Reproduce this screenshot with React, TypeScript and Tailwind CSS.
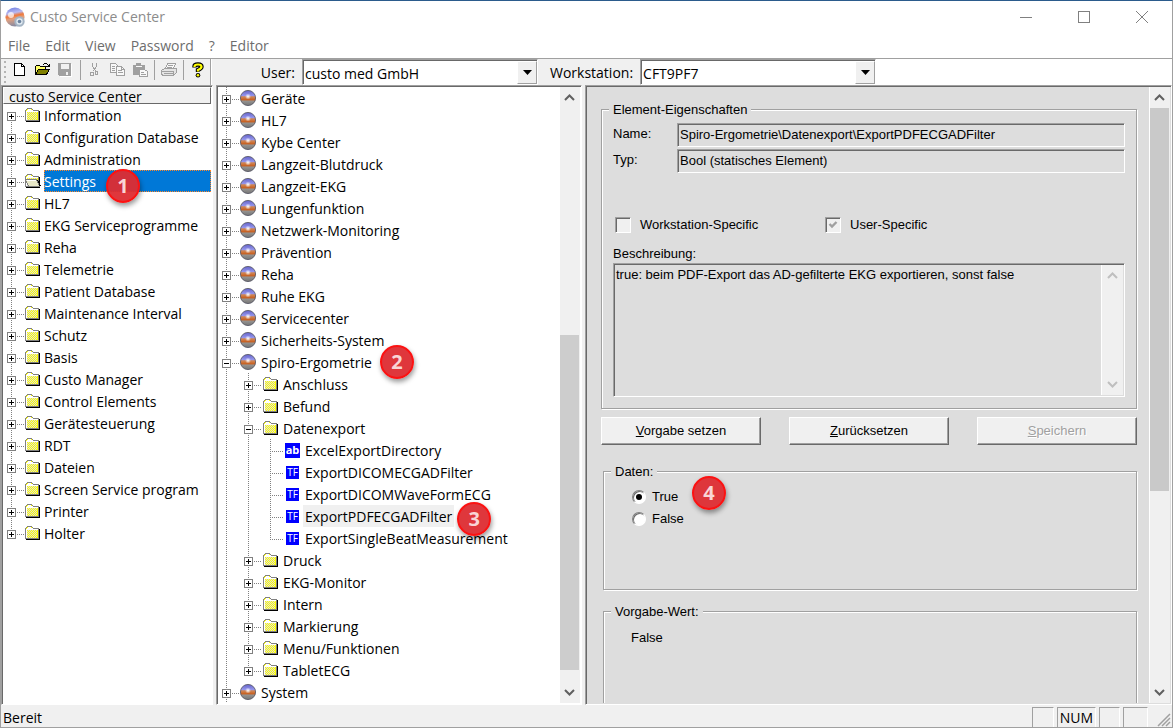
import { useState } from 'react';
import type { ReactNode } from 'react';

type IconKind = 'folder' | 'folderOpen' | 'ball' | 'ab' | 'tf';

type TreeNode = {
  label: string;
  icon: IconKind;
  badge?: number;
  badgeClass?: string;
  children?: TreeNode[];
  leaf?: boolean;
};

const sections = [
  'Information', 'Configuration Database', 'Administration', 'Settings', 'HL7',
  'EKG Serviceprogramme', 'Reha', 'Telemetrie', 'Patient Database',
  'Maintenance Interval', 'Schutz', 'Basis', 'Custo Manager', 'Control Elements',
  'Gerätesteuerung', 'RDT', 'Dateien', 'Screen Service program', 'Printer', 'Holter',
];

const modules = [
  'Geräte', 'HL7', 'Kybe Center', 'Langzeit-Blutdruck', 'Langzeit-EKG',
  'Lungenfunktion', 'Netzwerk-Monitoring', 'Prävention', 'Reha', 'Ruhe EKG',
  'Servicecenter', 'Sicherheits-System',
];

const folder = (label: string): TreeNode => ({ label, icon: 'folder' });

const settingsTree: TreeNode[] = [
  ...modules.map((label): TreeNode => ({ label, icon: 'ball' })),
  {
    label: 'Spiro-Ergometrie',
    icon: 'ball',
    badge: 2,
    badgeClass: '-top-1.5 left-full ml-1.5',
    children: [
      folder('Anschluss'),
      folder('Befund'),
      {
        label: 'Datenexport',
        icon: 'folder',
        children: [
          { label: 'ExcelExportDirectory', icon: 'ab', leaf: true },
          { label: 'ExportDICOMECGADFilter', icon: 'tf', leaf: true },
          { label: 'ExportDICOMWaveFormECG', icon: 'tf', leaf: true },
          { label: 'ExportPDFECGADFilter', icon: 'tf', leaf: true, badge: 3, badgeClass: '-top-[3px] left-full ml-[3px]' },
          { label: 'ExportSingleBeatMeasurement', icon: 'tf', leaf: true },
        ],
      },
      folder('Druck'),
      folder('EKG-Monitor'),
      folder('Intern'),
      folder('Markierung'),
      folder('Menu/Funktionen'),
      folder('TabletECG'),
    ],
  },
  { label: 'System', icon: 'ball' },
];

const sunken =
  'border border-t-[#a0a0a0] border-l-[#a0a0a0] border-r-white border-b-white shadow-[inset_1px_1px_0_#696969]';
const raised =
  'border border-t-white border-l-white border-r-[#696969] border-b-[#696969] shadow-[inset_-1px_-1px_0_#a0a0a0]';

function Badge({ n, className }: { n: number; className: string }) {
  return (
    <span
      className={`absolute z-10 flex h-[34px] w-[34px] items-center justify-center rounded-full border-2 border-[#fb1212] bg-[#dd2c32]/95 font-['Open_Sans',sans-serif] text-[20px] leading-none font-bold text-[#f9d5d6] shadow-[1px_3px_5px_rgba(0,0,0,0.4)] ${className}`}
    >
      {n}
    </span>
  );
}

function Ball() {
  return (
    <svg width="17" height="18" viewBox="0 0 17 18">
      <defs>
        <linearGradient id="ball" x1="0" y1="0" x2="0" y2="1">
          <stop offset="0" stopColor="#6464c8" />
          <stop offset="0.34" stopColor="#9494ec" />
          <stop offset="0.42" stopColor="#d08858" />
          <stop offset="0.62" stopColor="#c86020" />
          <stop offset="0.7" stopColor="#949290" />
          <stop offset="1" stopColor="#747474" />
        </linearGradient>
        <radialGradient id="shine">
          <stop offset="0" stopColor="#fff" />
          <stop offset="1" stopColor="#fff" stopOpacity="0" />
        </radialGradient>
      </defs>
      <circle cx="8" cy="9" r="7.6" fill="url(#ball)" stroke="#505060" strokeWidth="0.8" />
      <circle cx="8" cy="7.5" r="3" fill="url(#shine)" />
    </svg>
  );
}

// every second pixel of the folder face
const dither = Array.from({ length: 8 }, (_, row) =>
  Array.from({ length: 5 }, (_, col) => `M${3 + col * 2 - (row % 2)} ${4 + row}h1v1h-1z`).join(''),
).join('');

function Folder({ open }: { open?: boolean }) {
  return (
    <svg width="16" height="14" viewBox="0 0 16 14" shapeRendering="crispEdges">
      <path d="M1 13.5H14.5V3" fill="none" stroke="#000" />
      <path d="M.5 12.5V2.5L2.5.5H6.5L8.5 2.5H13.5V12.5Z" fill="#ffff00" stroke="#808080" />
      <path d={dither} fill="#dcdcdc" />
      <path d="M1.5 12V3.5H13M2 2.5H8M3 1.5H6" fill="none" stroke="#fff" />
      {open && (
        <>
          <path d="M.5 5.5H11.5L14.5 12.5H3.5Z" fill="#e8e8c8" stroke="#808080" />
          <path d="M1.5 6.5H11" stroke="#fff" />
          <path d="M12.5 6L15.5 12.5" stroke="#000" />
        </>
      )}
    </svg>
  );
}

function NodeIcon({ kind }: { kind: IconKind }) {
  if (kind === 'ball') return <Ball />;
  if (kind === 'ab') {
    return (
      <span className="ml-px flex h-[15px] w-[15px] items-center justify-center bg-[#0000ff] pb-px text-[11px] leading-none font-bold text-white">
        ab
      </span>
    );
  }
  if (kind === 'tf') {
    return (
      <span className="ml-0.5 flex h-[13px] w-[13px] items-center justify-center bg-[#0000ff] text-[10px] leading-none text-white">
        TF
      </span>
    );
  }
  return <Folder open={kind === 'folderOpen'} />;
}

type GuideProps = { up: boolean; down: boolean; box?: 'plus' | 'minus'; across?: boolean };

// one 22px indentation cell: dotted connector lines and the +/- box
function Guide({ up, down, box, across }: GuideProps) {
  return (
    <svg width="22" height="22" viewBox="0 0 22 22" className="shrink-0" shapeRendering="crispEdges">
      <g stroke="#808080" strokeDasharray="1 1">
        {up && <path d="M8.5 0V12" />}
        {down && <path d="M8.5 12V22" />}
        {across && <path d="M8 12.5H21" />}
      </g>
      {box && (
        <>
          <rect x="4.5" y="8.5" width="8" height="8" fill="#fff" stroke="#808080" />
          <path d={box === 'plus' ? 'M6 12.5H11M8.5 10V15' : 'M6 12.5H11'} stroke="#000" />
        </>
      )}
    </svg>
  );
}

type BranchProps = {
  nodes: TreeNode[];
  selected: string;
  onSelect: (label: string) => void;
  parents?: boolean[];
  openEnd?: boolean;
};

function Branch({ nodes, selected, onSelect, parents = [], openEnd = false }: BranchProps) {
  return (
    <ul>
      {nodes.map((node, i) => {
        const more = openEnd || i < nodes.length - 1;
        return (
          <li key={node.label}>
            <div className="flex h-[22px] items-center">
              {parents.map((line, p) => (
                <Guide key={p} up={line} down={line} />
              ))}
              <Guide up down={more} across box={node.leaf ? undefined : node.children ? 'minus' : 'plus'} />
              <span className={`flex w-[19px] shrink-0 items-center ${node.icon === 'folder' ? 'pl-px' : ''}`}>
                <NodeIcon kind={node.icon} />
              </span>
              <button
                type="button"
                onClick={() => onSelect(node.label)}
                className={`relative h-[22px] px-0.5 pt-px leading-[21px] whitespace-nowrap ${selected === node.label ? 'bg-[#f0f0f0]' : ''}`}
              >
                {node.label}
                {node.badge && <Badge n={node.badge} className={node.badgeClass ?? ''} />}
              </button>
            </div>
            {node.children && (
              <Branch nodes={node.children} selected={selected} onSelect={onSelect} parents={[...parents, more]} />
            )}
          </li>
        );
      })}
    </ul>
  );
}

function Chevron({ up, light }: { up?: boolean; light?: boolean }) {
  return (
    <svg width="11" height="7" viewBox="0 0 11 7" fill="none" stroke={light ? '#bfbfbf' : '#606060'} strokeWidth="2">
      <path d={up ? 'M1 6L5.5 1.5L10 6' : 'M1 1L5.5 5.5L10 1'} />
    </svg>
  );
}

function ScrollBar({ children, light, className }: { children?: ReactNode; light?: boolean; className: string }) {
  return (
    <div className={`flex shrink-0 flex-col bg-[#f0f0f0] pr-px ${className}`}>
      <button type="button" aria-label="Nach oben" className="flex h-[21px] shrink-0 items-center justify-center">
        <Chevron up light={light} />
      </button>
      <div className="flex min-h-0 flex-1 flex-col">{children}</div>
      <button type="button" aria-label="Nach unten" className="flex h-[21px] shrink-0 items-center justify-center">
        <Chevron light={light} />
      </button>
    </div>
  );
}

function Combo({ id, label, value }: { id: string; label: string; value: string }) {
  return (
    <>
      <label htmlFor={id} className="flex items-center justify-end pt-0.5 pr-[7px] pl-3 whitespace-nowrap">
        {label}
      </label>
      <div className={`relative w-[236px] shrink-0 bg-white ${sunken}`}>
        <select id={id} defaultValue={value} className="h-full w-full appearance-none bg-transparent pt-1 pl-0.5 leading-5 outline-none">
          <option>{value}</option>
        </select>
        <span className="pointer-events-none absolute top-px right-0 bottom-0 flex w-5 items-center justify-center border border-white border-r-[#a0a0a0] border-b-[#a0a0a0] bg-[#f0f0f0]">
          <svg width="9" height="5" viewBox="0 0 9 5">
            <path d="M0 0H9L4.5 5Z" />
          </svg>
        </span>
      </div>
    </>
  );
}

function Tool({ label, className, children }: { label: string; className: string; children: ReactNode }) {
  return (
    <button type="button" aria-label={label} className={`shrink-0 ${className}`}>
      <svg width="16" height="16" viewBox="0 0 16 16" fill="none" shapeRendering="crispEdges">
        {children}
      </svg>
    </button>
  );
}

const Separator = () => <span className="h-5 w-px shrink-0 bg-[#a0a0a0]" />;

function ToolBar() {
  return (
    <div className="flex h-full w-[210px] shrink-0 items-center border-r border-[#a0a0a0] pb-1 pl-[3px]">
      <svg width="3" height="22" viewBox="0 0 3 22" fill="#b4b4b4" className="mt-1">
        {[0, 5, 10, 15, 20].map((y) => (
          <rect key={y} y={y} width="2" height="2" />
        ))}
      </svg>
      <Tool label="Neu" className="ml-1.5">
        <path d="M1.5 1.5H8.5L11.5 4.5V13.5H1.5Z" fill="#fff" stroke="#000" />
        <path d="M8.5 1V4.5H12" stroke="#000" />
      </Tool>
      <Tool label="Öffnen" className="ml-1.5">
        <path d="M.5 12.5V4.5L1.5 3.5H4.5L5.5 4.5H10.5V7" fill="#ffff66" stroke="#000" />
        <path d="M.5 12.5L3.5 7.5H14.5L11.5 12.5Z" fill="#808000" stroke="#000" />
        <path d="M8 2.5H9M9 1.5H12M12 2.5H13M13 3.5H14M11 4.5H15M14.5 2V5" stroke="#000" />
      </Tool>
      <Tool label="Speichern" className="ml-1.5">
        <path d="M2 2H15V15H3L2 14Z" fill="#fff" />
        <path d="M1 1H14V14H2L1 13Z" fill="#a0a0a0" />
        <path d="M4 2H12V7H4ZM9 10H11V13H9Z" fill="#f0f0f0" />
      </Tool>
      <span className="ml-[7px]" />
      <Separator />
      <Tool label="Ausschneiden" className="ml-1.5">
        <g stroke="#a0a0a0">
          <path d="M5.5 1V4L8.5 9M9.5 1V4L6.5 9" />
          <path d="M3.5 10.5H6.5V13.5H3.5ZM8.5 9.5H10.5V12.5H8.5Z" />
        </g>
      </Tool>
      <Tool label="Kopieren" className="ml-1.5">
        <g stroke="#a0a0a0" fill="#f8f8f8">
          <path d="M1.5 1.5H6.5L8.5 3.5V10.5H1.5Z" />
          <path d="M7.5 4.5H12.5L15.5 7.5V13.5H7.5Z" />
          <path d="M3 4.5H6M3 6.5H6M3 8.5H6M9 8.5H13M9 10.5H14M12.5 5V7.5H15" />
        </g>
      </Tool>
      <Tool label="Einfügen" className="ml-[7px]">
        <path d="M1 3H4V1H9V3H13V13H1Z" fill="#a0a0a0" />
        <path d="M4 4.5H10" stroke="#f8f8f8" />
        <path d="M7.5 7.5H12.5L15.5 9.5V14.5H7.5Z" fill="#f8f8f8" stroke="#a0a0a0" />
        <path d="M9 10.5H12M9 12.5H14" stroke="#a0a0a0" />
      </Tool>
      <span className="ml-1.5" />
      <Separator />
      <Tool label="Drucken" className="ml-1.5">
        <path d="M4.5 6.5L6.5 1.5H14.5L12.5 6.5" fill="#f8f8f8" stroke="#a0a0a0" />
        <path d="M7 3.5H12M6 5.5H11" stroke="#a0a0a0" />
        <path d="M.5 8.5L3.5 6.5H15.5V10.5L12.5 13.5H2.5L.5 12.5Z" fill="#e4e4e4" stroke="#a0a0a0" />
        <path d="M1 9.5H12M3 11.5H12M12.5 9V13" stroke="#a0a0a0" />
      </Tool>
      <span className="ml-1.5" />
      <Separator />
      <Tool label="Hilfe" className="ml-1.5">
        <g shapeRendering="geometricPrecision">
          <path d="M4.5 5.5V4.5Q4.5 2.5 8 2.5T11.5 4.8Q11.5 6.4 8 8V10" stroke="#000" strokeWidth="4.4" />
          <circle cx="8" cy="13.2" r="2.3" fill="#000" />
          <path d="M4.5 5V4.5Q4.5 2.5 8 2.5T11.5 4.8Q11.5 6.4 8 8V9.5" stroke="#ffff00" strokeWidth="2.2" />
          <circle cx="8" cy="13.2" r="1.3" fill="#ffff00" />
        </g>
      </Tool>
    </div>
  );
}

function Group({ title, className, children }: { title: string; className: string; children: ReactNode }) {
  return (
    <fieldset
      className={`border border-[#a0a0a0] px-[11px] shadow-[1px_1px_0_#fff,inset_1px_1px_0_#fff] ${className}`}
    >
      <legend className="-ml-1 h-4 bg-[#dddddd] px-1 leading-[18px]">{title}</legend>
      {children}
    </fieldset>
  );
}

function Check({ label, checked, className }: { label: string; checked?: boolean; className: string }) {
  return (
    <label className={`flex h-4 items-center gap-[9px] leading-[18px] ${className}`}>
      <span className="grid">
        <input
          type="checkbox"
          defaultChecked={checked}
          className={`peer col-start-1 row-start-1 h-4 w-4 appearance-none bg-[#f0f0f0] ${sunken}`}
        />
        <svg
          width="16"
          height="16"
          viewBox="0 0 16 16"
          className="pointer-events-none col-start-1 row-start-1 hidden peer-checked:block"
        >
          <path d="M4.5 7L7 9.5L11.5 5" fill="none" stroke="#a0a0a0" strokeWidth="2.4" />
        </svg>
      </span>
      {label}
    </label>
  );
}

function Radio({ label, checked, onChange }: { label: string; checked: boolean; onChange: () => void }) {
  return (
    <label className="flex h-[22px] w-fit items-center gap-1.5">
      <span className="grid">
        <input
          type="radio"
          name="daten"
          checked={checked}
          onChange={onChange}
          className="peer col-start-1 row-start-1 h-3.5 w-3.5 appearance-none rounded-full border border-t-[#808080] border-r-white border-b-white border-l-[#808080] bg-white shadow-[inset_1px_1px_0_#696969]"
        />
        <svg
          width="14"
          height="14"
          viewBox="0 0 14 14"
          className="pointer-events-none col-start-1 row-start-1 hidden peer-checked:block"
        >
          <circle cx="7" cy="7" r="3" />
        </svg>
      </span>
      {label}
    </label>
  );
}

function Details() {
  const [value, setValue] = useState(true);

  return (
    <div className="min-w-0 flex-1 overflow-hidden pt-3.5 pr-3 pl-3.5 font-['Liberation_Sans',Arial,sans-serif] text-[13px] leading-4">
      <Group title="Element-Eigenschaften" className="pt-1.5 pb-[11px]">
        <div className="grid grid-cols-[64px_1fr] gap-y-0.5">
          <label htmlFor="name" className="pt-[3px]">Name:</label>
          <input
            id="name"
            readOnly
            value="Spiro-Ergometrie\Datenexport\ExportPDFECGADFilter"
            className={`h-6 w-full px-0.5 pb-0.5 outline-none ${sunken}`}
          />
          <label htmlFor="typ" className="pt-[3px]">Typ:</label>
          <input
            id="typ"
            readOnly
            value="Bool (statisches Element)"
            className={`h-6 w-full px-0.5 pb-0.5 outline-none ${sunken}`}
          />
        </div>
        <div className="mt-11 flex">
          <Check label="Workstation-Specific" className="ml-0.5 w-[210px]" />
          <Check label="User-Specific" checked className="" />
        </div>
        <label htmlFor="beschreibung" className="mt-[13px] block">Beschreibung:</label>
        <div className={`mt-px flex h-[134px] p-px ${sunken}`}>
          <textarea
            id="beschreibung"
            readOnly
            value="true: beim PDF-Export das AD-gefilterte EKG exportieren, sonst false"
            className="min-w-0 flex-1 resize-none overflow-hidden pt-0.5 pl-px outline-none"
          />
          <ScrollBar light className="w-[22px] border-l border-white" />
        </div>
      </Group>
      <div className="mt-2 grid grid-cols-3 gap-7">
        <button type="button" className={`h-7 bg-[#f0f0f0] ${raised}`}>
          <u>V</u>orgabe setzen
        </button>
        <button type="button" className={`h-7 bg-[#f0f0f0] ${raised}`}>
          <u>Z</u>urücksetzen
        </button>
        <button type="button" disabled className={`h-7 bg-[#f0f0f0] text-[#a0a0a0] text-shadow-[1px_1px_0_#fff] ${raised}`}>
          <u>S</u>peichern
        </button>
      </div>
      <Group title="Daten:" className="relative mt-[18px] ml-0.5 h-[127px] pt-[7px]">
        <div className="pl-[17px]">
          <Radio label="True" checked={value} onChange={() => setValue(true)} />
          <Radio label="False" checked={!value} onChange={() => setValue(false)} />
        </div>
        <Badge n={4} className="-top-[3px] left-[88px]" />
      </Group>
      <Group title="Vorgabe-Wert:" className="mt-[13px] ml-0.5 h-32 pt-[11px]">
        <p className="pl-4">False</p>
      </Group>
    </div>
  );
}

export default function App() {
  const [section, setSection] = useState('Settings');
  const [selected, setSelected] = useState('ExportPDFECGADFilter');

  return (
    <div className="flex h-screen flex-col border border-[#a0a0a0] border-t-[#2b5b8c] bg-[#f0f0f0] font-['Open_Sans','Noto_Sans',sans-serif] text-[14px] leading-[22px] text-black">
      {/* title bar */}
      <header className="flex h-8 shrink-0 items-center bg-white pr-px pl-1 text-[#8c8c8c]">
        <svg width="21" height="21" viewBox="0 0 21 21">
          <defs>
            <linearGradient id="app" x1="0" y1="0" x2="0.2" y2="1">
              <stop offset="0" stopColor="#6478e0" />
              <stop offset="0.35" stopColor="#b8b8f0" />
              <stop offset="0.5" stopColor="#f07838" />
              <stop offset="0.65" stopColor="#e0a080" />
              <stop offset="1" stopColor="#8c8ca0" />
            </linearGradient>
          </defs>
          <circle cx="10" cy="10" r="9.6" fill="url(#app)" />
          <circle cx="6" cy="8" r="3" fill="#fff" opacity="0.7" />
          <circle cx="14.5" cy="14.5" r="4.2" fill="#dfe8f0" stroke="#a4b4c4" strokeWidth="2" />
          <circle cx="14.5" cy="14.5" r="1.8" fill="#6c84a0" />
        </svg>
        <h1 className="flex-1 pl-1">Custo Service Center</h1>
        <button type="button" aria-label="Minimieren" className="flex w-[58px] justify-center">
          <svg width="12" height="12" stroke="#808080" shapeRendering="crispEdges"><path d="M0 6.5H12" /></svg>
        </button>
        <button type="button" aria-label="Maximieren" className="flex w-[58px] justify-center">
          <svg width="12" height="12" stroke="#808080" fill="none" shapeRendering="crispEdges"><path d="M.5 .5H11.5V11.5H.5Z" /></svg>
        </button>
        <button type="button" aria-label="Schließen" className="flex w-[58px] justify-center">
          <svg width="12" height="12" stroke="#808080"><path d="M0 0L12 12M12 0L0 12" /></svg>
        </button>
      </header>

      <nav className="flex h-[25px] shrink-0 items-center gap-[15px] bg-white pl-[7px] text-[#6d6d6d]">
        {['File', 'Edit', 'View', 'Password', '?', 'Editor'].map((item) => (
          <button key={item} type="button">{item}</button>
        ))}
      </nav>

      <div className="flex h-[27px] shrink-0 border-t border-[#a0a0a0]">
        <ToolBar />
        <div className="flex w-[327px] shrink-0 justify-end border-l border-white">
          <Combo id="user" label="User:" value="custo med GmbH" />
        </div>
        <Combo id="workstation" label="Workstation:" value="CFT9PF7" />
        <div className="flex-1 bg-white" />
      </div>

      <main className="flex min-h-0 flex-1 gap-[3px]">
        <section className={`w-[212px] shrink-0 bg-white p-px ${sunken}`}>
          <h2 className="h-[17px] border border-t-white border-r-[#696969] border-b-[#696969] border-l-white bg-[#f0f0f0] pl-[5px] leading-[18px]">
            custo Service Center
          </h2>
          <ul>
            {sections.map((label, i) => (
              <li key={label} className="flex h-[22px] items-center">
                <Guide up={i > 0} down={i < sections.length - 1} across box="plus" />
                <span className="flex w-[19px] shrink-0 items-center">
                  <NodeIcon kind={label === section ? 'folderOpen' : 'folder'} />
                </span>
                <button
                  type="button"
                  onClick={() => setSection(label)}
                  className={`relative h-[22px] flex-1 pt-px text-left leading-[21px] whitespace-nowrap ${
                    label === section ? 'bg-[#0078d7] text-white outline-1 -outline-offset-1 outline-dotted outline-[#ff8728]' : ''
                  }`}
                >
                  {label}
                  {label === 'Settings' && <Badge n={1} className="-top-px left-[62px]" />}
                </button>
              </li>
            ))}
          </ul>
        </section>

        <section className={`flex w-[366px] shrink-0 bg-white p-px ${sunken}`}>
          <div className="min-w-0 flex-1 overflow-hidden">
            <Branch nodes={settingsTree} selected={selected} onSelect={setSelected} openEnd />
          </div>
          <ScrollBar className="w-5">
            <div className="flex-[227]" />
            <div className="flex-[335] bg-[#cdcdcd]" />
            <div className="flex-[12]" />
          </ScrollBar>
        </section>

        <section className={`flex min-w-0 flex-1 bg-[#dddddd] p-px ${sunken}`}>
          <Details />
          <ScrollBar className="w-[21px] border-l border-white">
            <div className="flex-[383] bg-[#c9c9c9]" />
            <div className="flex-[191]" />
          </ScrollBar>
        </section>
      </main>

      <footer className="flex h-[22px] shrink-0 gap-[3px] pt-0.5 leading-[22px]">
        <p className="flex-1 pl-0.5">Bereit</p>
        <span className="w-[22px] border-t border-r border-l border-[#a0a0a0] border-r-white" />
        <span className="w-[39px] border-t border-r border-l border-[#a0a0a0] border-r-white text-center leading-5">NUM</span>
        <span className="w-[21px] border-t border-r border-l border-[#a0a0a0] border-r-white" />
        <span className="w-[25px] border-t border-r border-l border-[#a0a0a0] border-r-white" />
        <svg width="21" height="20" viewBox="0 0 21 20" stroke="#a0a0a0" strokeWidth="1.5">
          <path d="M7 19L19 7M11 19L19 11M15 19L19 15" />
        </svg>
      </footer>
    </div>
  );
}
